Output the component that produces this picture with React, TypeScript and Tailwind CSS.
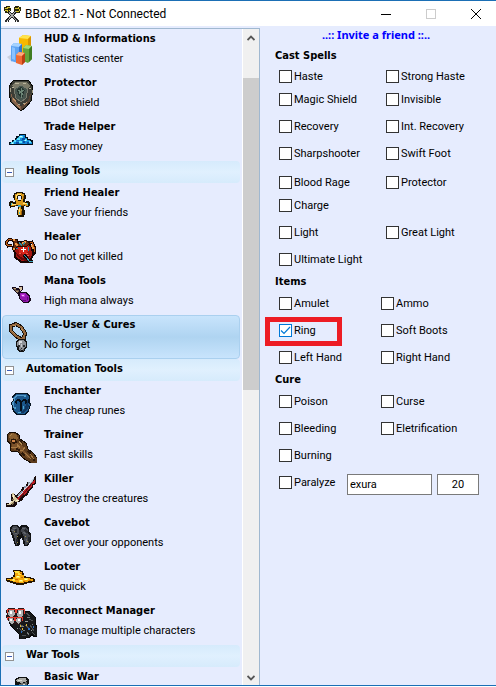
import { useState } from "react";
import type { ReactNode } from "react";

type Tool = { name: string; hint: string; icon: ReactNode };
type Group = { title?: string; tools: Tool[] };
type Spell = { label: string; checked?: boolean };

function Sprite({ children }: { children: ReactNode }) {
  return (
    <svg viewBox="0 0 32 32" className="h-8 w-8 shrink-0" shapeRendering="crispEdges" fill="none" aria-hidden="true">
      {children}
    </svg>
  );
}

const hudIcon = (
  <svg viewBox="0 0 32 32" className="h-8 w-8 shrink-0" fill="none" aria-hidden="true">
    <path d="M2 22l5-3v8z" fill="#c9cfdd" />
    <path d="M14 3l4-3 8 1v18l-5 3-7-2z" fill="#f8b800" />
    <path d="M14 3l4-3 8 1-3 3z" fill="#ffe34d" />
    <path d="M23 4l3-3v18l-3 2z" fill="#d99400" />
    <path d="M6 11l3-3 8 1v15l-4 4-7-2z" fill="#5fa4f3" />
    <path d="M6 11l3-3 8 1-3 3z" fill="#a5d2ff" />
    <path d="M14 12l3-3v15l-3 3z" fill="#3474cc" />
    <path d="M7 12l3 1v12l-3-1z" fill="#8cc3ff" />
    <path d="M18 13l3-3 6 1v13l-4 4-5-2z" fill="#65a53b" />
    <path d="M18 13l3-3 6 1-3 3z" fill="#a4d976" />
    <path d="M24 14l3-3v13l-3 3z" fill="#407c22" />
    <path d="M11 20l3-3 6 1v9l-3 3-6-2z" fill="#ef6a34" />
    <path d="M11 20l3-3 6 1-3 3z" fill="#ffab7c" />
    <path d="M17 21l3-3v9l-3 3z" fill="#b93e13" />
  </svg>
);

const shieldIcon = (
  <Sprite>
    <path d="M4 7l4-5 5-1h6l5 1 4 6-1 8-1 6-5 6-5 4-5-4-5-5-2-8z" fill="#3c3d36" stroke="#0c0c0a" />
    <path d="M7 6l3-3h11l4 4-3 3-6-4-7 4z" fill="#7c7a68" />
    <path d="M10 4h4M18 4h3M7 8h2M24 9h2" stroke="#b9b49c" />
    <path d="M9 10l7-4 7 4-2 9-5 4-5-4z" fill="#46544d" stroke="#77796b" />
    <path d="M12 10l4-2 4 3-2 6-2 2-3-3z" fill="#26342f" />
    <path d="M13 11l3 2 3-2M14 15l2-3 2 4M16 9v10" stroke="#6d8777" />
    <path d="M6 14l3 7 4 4 3 2v4l-4-3-5-6z" fill="#85624a" />
    <path d="M26 14l-3 7-4 4-3 2v4l4-3 5-6z" fill="#594434" />
    <path d="M8 19l3 4M12 26l3 3M19 26l3-3" stroke="#c08f63" />
    <path d="M13 25h2M18 24h2M5 9v4M27 11v3" stroke="#a8a18a" />
  </Sprite>
);

const tradeIcon = (
  <Sprite>
    <path d="M4 22v-3h3v-2h3v-2h1v-2h3v-2h7v3h2v2h3v1h2v5z" fill="#05121e" />
    <path d="M5 21v-1h3v-2h3v-2h2v-2h2v-2h5v3h2v2h3v2h2v2z" fill="#128bdb" />
    <path d="M6 20h3M9 18h2M12 16h3M14 14h4M19 17h3M24 19h2M14 19h3" stroke="#5be0f8" strokeWidth="2" />
    <path d="M11 20h3M17 16h3M22 20h2M18 19h2" stroke="#0a4fa6" strokeWidth="2" />
    <path d="M12 17h2M16 17h2M19 13h1" stroke="#0c6cc0" />
    <path d="M15 13h2M7 20h1M20 17h1" stroke="#d0fbff" />
  </Sprite>
);

const ankhIcon = (
  <Sprite>
    <path d="M11 3h7v1h2v2h1v4h-1v3h1v-1h3v1h1v4h-1v1h-3v-1h-2v4h1v5h-1v2h-6v-2h-1v-5h1v-4h-3v1H6v1H5v-2H4v-4h1v-1h3v1h2v-2H9V9H8V6h1V4h2z" fill="#1b1204" />
    <path d="M12 4h5v1h2v5h-1v3h2v1h3v3h-3v-1h-4v4h1v6h-4v-6h1v-4h-4v1H6v-3h2v1h3v-3h-1V5h2z" fill="#dc9b1c" />
    <path d="M13 6h3v1h1v3h-1v2h-3v-2h-1V7h1z" fill="#1b1204" />
    <path d="M13 7h3v4h-3z" fill="#e6ecfe" />
    <path d="M11 6v3M7 15h4M14 19v7M12 5h4M18 14h4" stroke="#ffe27a" />
    <path d="M16 22v4M18 7v3M16 16h3M9 16h2" stroke="#9e5d0b" />
    <path d="M13 16h3v2h-3z" fill="#3b9fba" />
    <path d="M6 15h1M22 15h1M14 24h1" stroke="#52c4d2" strokeWidth="2" />
  </Sprite>
);

const healerIcon = (
  <Sprite>
    <path d="M9 14l5-5h8l5 5 1 8-3 6-3 1h-6l-6-5z" fill="#a31410" stroke="#170503" strokeWidth="2" />
    <path d="M13 14l4-4 5 2 2 5-4 4-6-1z" fill="#d7261b" />
    <path d="M11 19l4 5 6 2 4-4-1 5-3 1-5-1-4-4z" fill="#650807" />
    <path d="M7 12l-4 1-2-3 2-3 4-1M23 10l4-1 2 4 1 6-2 3" stroke="#170503" strokeWidth="3" />
    <path d="M7 12l-4 1-2-3 2-3 4-1M24 10l3-1 2 5v5" stroke="#bd5c17" />
    <path d="M7 6h5l1 4h3l5-3 4 3-3 3h-6l-4 1-3 4-2-2 2-5z" fill="#6d2f10" stroke="#210b03" />
    <path d="M8 7h2M10 11l3 1M17 10l4-1M9 15v2M27 12l1 4" stroke="#f09b45" strokeWidth="2" />
    <path d="M14 9l3 4M20 9l-2 3M24 14l-1 4M11 15l2 1" stroke="#288ca4" />
    <path d="M19 22l3 3 2 3 4 1" stroke="#170503" strokeWidth="3" />
    <path d="M19 22l3 3 2 3h4" stroke="#3aa3bd" />
    <path d="M18 14v5M16 16h5" stroke="#fff" />
    <path d="M14 20h2M21 20h2M22 22h2" stroke="#f1584a" />
  </Sprite>
);

const manaIcon = (
  <Sprite>
    <path d="M7 10h4v1h3v-2h4v3l-2 3h5l4 4 1 4-2 3h-5l-4-3-2-5-5-5z" fill="#16091a" />
    <path d="M8 11h3v2h3v2l-2 1-4-4z" fill="#6c5947" />
    <path d="M14 10h3v2l-2 2z" fill="#d9c5a4" />
    <path d="M9 11h2M11 14h2" stroke="#b69a74" />
    <path d="M15 16h6l3 4v4l-3 1h-3l-3-3z" fill="#9318ad" />
    <path d="M16 17h4v3h-3z" fill="#b935d2" />
    <path d="M17 23h4M22 20v3" stroke="#610a7c" />
    <path d="M17 18h2" stroke="#f7b7ff" />
  </Sprite>
);

const amuletIcon = (
  <Sprite>
    <path d="M6 5l5-2 5 3 4 6-1 5-3 1-5-3-5-5z" stroke="#17100a" strokeWidth="4" />
    <path d="M6 5l5-2 5 3 4 6-1 5-3 1-5-3-5-5z" stroke="#94683d" strokeWidth="2" />
    <path d="M8 4h3M16 7l2 3M7 10l3 3" stroke="#ba8c57" />
    <path d="M13 18h7l2 3v5l-2 2v2l-2 1h-4l-2-2v-2l-1-2v-4z" fill="#111" />
    <path d="M14 19h5l2 3v3l-2 2v2h-5v-2l-2-2v-3z" fill="#8e9196" />
    <path d="M14 20h3v2h-2v2h-1z" fill="#d7dade" />
    <path d="M13 24h2v2h-2zM18 24h2v2h-2zM16 27h1v1h-1z" fill="#2b2d30" />
    <path d="M15 28v2M18 28v2" stroke="#54575b" />
    <path d="M16 23h1v3h-1z" fill="#c8cbd0" />
  </Sprite>
);

const runeIcon = (
  <Sprite>
    <path d="M10 6h12l3 2v6l1 4-2 6-4 4h-8l-4-3-1-5-1-4 2-3-1-4z" fill="#061421" />
    <path d="M11 7h10l3 2-1 6 2 3-2 5-4 4h-6l-4-3-1-8 1-3-1-3z" fill="#1b568a" />
    <path d="M11 8h9l1 1H12l-2 3-1 5 1 6-2-3-1-4 2-3-1-2z" fill="#5196c5" />
    <path d="M22 10l1 6 1 3-2 4-4 3h-4l5-3 2-5z" fill="#10365f" />
    <path
      d="M11 13h1v-1h3v1h1v1h1v-1h1v-1h3v1h1v3h-1v1h-1v-3h-2v1h-1v9h-2v-9h-1v-1h-2v3h-1v-1h-1z"
      fill="#05101b"
    />
    <path d="M10 20v2M13 25h3M19 9h2M18 19v3" stroke="#4ba7d0" />
  </Sprite>
);

const trainerIcon = (
  <Sprite>
    <path d="M2 4l3-3h5l4 3 1 4 6 4 2 6 5 4 4 5v5h-6l-8-5-5-6-2-1H6l-1-4 1-3-4-3z" fill="#5d3b1c" stroke="#160c04" />
    <path d="M4 4l3-2 4 1 2 4-2 3-3-3-3 3z" fill="#8a6132" />
    <path d="M6 8h5l1 4-3 1-3-2z" fill="#2c1809" />
    <path d="M7 9h3v2H7z" fill="#d1884c" />
    <path d="M7 13l6-1 6 4-1 3 8 7-3 1-9-7-7-2z" fill="#7c522a" />
    <path d="M6 16l4 1 4-2M14 19h4l2-3M20 22l6 6M25 23l4 5M12 13l3 4" stroke="#a87b45" />
    <path d="M11 18l4 1M17 22l3 3M15 9l2 4M23 20l3 3M28 29h2" stroke="#2d1a0b" strokeWidth="2" />
    <path d="M5 5l2-2M14 10l3 4" stroke="#b18a51" />
  </Sprite>
);

const swordIcon = (
  <Sprite>
    <path d="M31 0v9l-3 1v3l-4 3-1 4-4 2-2 4-5 1v3l-3 2H1v-4h3l2-2v-7h3l2 2 3-4 2-1 1-4 4-1 1-4h4z" fill="#180b0b" />
    <path d="M30 2l-4 5h-3v4h-4v4l-5 3-2 4 2 2 5-4 3-4 5-7z" fill="#8c98a8" />
    <path d="M29 3l-6 8-6 7-4 4M24 8v3M19 13v3" stroke="#cfd8e2" />
    <path d="M30 5v3l-3 1v3l-4 3-2 4-4 2-2 3-3 1v-2l6-6 6-7z" fill="#bb1d22" />
    <path d="M27 8l-6 8-7 8" stroke="#601014" />
    <path d="M7 18h2l1 4 5 4-4 1-2-1-3 4H2v-1h3l3-4z" fill="#d2c49c" />
    <path d="M8 20v3M11 25h3M4 29l3-3" stroke="#fff4cc" />
    <path d="M7 24l2 1M9 27l-2 3" stroke="#7e6947" />
  </Sprite>
);

const bootsIcon = (
  <Sprite>
    <path d="M7 6h5l2 2 3-2h4l3 3v3l2 3v7l-2 3-2 2h-3l-1-4-1-5-2 3v4l-2 2h-3l-1-4-2-5-1-5H5v-5z" fill="#111214" />
    <path d="M8 7h4l2 3v5l-2 1-1 8 1 1-1 1-2-9-3-6z" fill="#474a50" />
    <path d="M17 8h3l3 3v4l2 2-1 6-2 3h-2l-1-8-3-6z" fill="#42454c" />
    <path d="M8 9h3M7 11h2M17 9h3M18 13l3 2M10 14h2M21 20v3" stroke="#62666d" />
    <path d="M11 10v4M15 11v5M20 11l3 3M24 18v4M12 20v4" stroke="#25272b" strokeWidth="2" />
    <path d="M9 12h1M20 17h1M12 17h1M22 22h1M12 23h1" stroke="#9b8b45" />
  </Sprite>
);

const goldIcon = (
  <Sprite>
    <path d="M8 7h8v1h2v2h1v3h2v1h5v1h3v1h1v3h-3v1h-5v1h-3v1h-8v-1H8v-1H5v-1H2v-1H1v-3h5v-1h2v-2h1v-3H8z" fill="#241400" />
    <path d="M9 8h6v1h2v3h2v3h6v1h3v2h-5v1h-4v1h-7v-1H8v-1H5v-1H2v-1h6v-2h2V9H9z" fill="#f4a70a" />
    <path d="M10 9h4M13 11h3M11 14h4M7 17h3M19 16h4M14 18h4" stroke="#ffe343" strokeWidth="2" />
    <path d="M15 10h2M16 14h2M10 16h3M24 17h2M11 19h3M18 18h2" stroke="#c96d00" />
    <path d="M12 13h2M15 17h2M8 16h1M20 16h2" stroke="#fff7a5" />
  </Sprite>
);

const reconnectIcon = (
  <Sprite>
    <path d="M8 9h10l2-5 5 1 2 2 3 3v6l2 5v8l-3 1-2-3-2 3h-3l-2 2h-5l-1-5-5-5-5-6z" fill="#17191b" stroke="#070708" />
    <path d="M21 6l4 3M24 12l4 2M20 18l5 4M25 18l4 6M14 21l4 4M17 28h4M27 25l3 3M13 16l5 3" stroke="#4b5053" />
    <path d="M22 10h3M18 23h2M27 17h1M16 19h3M22 25l2 3" stroke="#777c7d" />
    <path d="M3 1h6l2 2 2-2h6l1 3-1 6-2 2v4l-4 2-4-1-4-1-3-3-1-4 1-2-1-3z" fill="#261819" />
    <path d="M4 3h5l1 4-2 3H5L3 7zM13 3h5v5l-3 3-3-2zM4 11h4l1 4-2 2-3-2zM12 11h4v4l-3 2-2-3z" fill="#aeb0b1" />
    <path d="M5 4h2v3H5zM14 4h2v3h-2zM5 12h2v2H5zM13 12h2v2h-2z" fill="#fff" />
    <path d="M2 6V3l2-1h6v4M11 6V3l2-1h6v5M2 13l1-3h6l1 4M10 14l1-4h7l-1 4" stroke="#e23a2d" />
    <path d="M15 19h1M21 18h1M17 22h1" stroke="#e0b831" strokeWidth="2" />
    <path d="M23 22h2M16 25h1M28 20h1" stroke="#246bc6" strokeWidth="2" />
    <path d="M12 21h1M20 14h3M26 23h1" stroke="#989c9c" />
  </Sprite>
);

const warIcon = (
  <Sprite>
    <path d="M10 6l4-2h8l2 3-1 8 1 9-9 6-8-4V12h3z" fill="#111" />
    <path d="M11 7l4-2h6l1 3-5 2-5-1z" fill="#a9a9a5" />
    <path d="M8 12h5l4-2 5-1v11H8z" fill="#696a67" />
    <path d="M13 7h4M9 13h2M18 11h2" stroke="#dad9d1" />
  </Sprite>
);

const groups: Group[] = [
  {
    tools: [
      { name: "HUD & Informations", hint: "Statistics center", icon: hudIcon },
      { name: "Protector", hint: "BBot shield", icon: shieldIcon },
      { name: "Trade Helper", hint: "Easy money", icon: tradeIcon },
    ],
  },
  {
    title: "Healing Tools",
    tools: [
      { name: "Friend Healer", hint: "Save your friends", icon: ankhIcon },
      { name: "Healer", hint: "Do not get killed", icon: healerIcon },
      { name: "Mana Tools", hint: "High mana always", icon: manaIcon },
      { name: "Re-User & Cures", hint: "No forget", icon: amuletIcon },
    ],
  },
  {
    title: "Automation Tools",
    tools: [
      { name: "Enchanter", hint: "The cheap runes", icon: runeIcon },
      { name: "Trainer", hint: "Fast skills", icon: trainerIcon },
      { name: "Killer", hint: "Destroy the creatures", icon: swordIcon },
      { name: "Cavebot", hint: "Get over your opponents", icon: bootsIcon },
      { name: "Looter", hint: "Be quick", icon: goldIcon },
      { name: "Reconnect Manager", hint: "To manage multiple characters", icon: reconnectIcon },
    ],
  },
  {
    title: "War Tools",
    tools: [{ name: "Basic War", hint: "", icon: warIcon }],
  },
];

function TitleBar() {
  return (
    <header className="flex h-[25px] shrink-0 items-center bg-white">
      <svg viewBox="0 0 18 18" className="ml-[2px] h-[18px] w-[18px]" shapeRendering="crispEdges" fill="none" aria-hidden="true">
        <path d="M4 5l10 11M14 5L4 16" stroke="#222" strokeWidth="3" />
        <path d="M4 5l10 11M14 5L4 16" stroke="#a9aaa8" />
        <path d="M1 2h2V1h4v2h1v3H6v2H2V6H1zM11 2h1V1h4v1h2v4h-1v2h-4V6h-2z" fill="#29270a" />
        <path d="M2 3h2V2h2v1M2 5h2v2M6 5v1M12 3h3V2M13 6h3M16 4v2" stroke="#d4c42c" />
        <path d="M2 15h2v2H2zM14 15h2v2h-2z" fill="#333" />
      </svg>
      <h1 className="ml-1 flex-1 font-['Roboto',sans-serif] text-[12px] leading-4 text-black">BBot 82.1 - Not Connected</h1>
      <button type="button" aria-label="Minimize" className="flex h-full w-10 items-center justify-center">
        <svg viewBox="0 0 10 10" className="h-[10px] w-[10px]" shapeRendering="crispEdges" aria-hidden="true">
          <path d="M0 5h10v1H0z" />
        </svg>
      </button>
      <button type="button" aria-label="Maximize" disabled className="flex h-full w-[50px] items-center justify-center">
        <svg viewBox="0 0 10 10" className="h-[10px] w-[10px]" shapeRendering="crispEdges" fill="none" aria-hidden="true">
          <path d="M.5.5h9v9h-9z" stroke="#ccc" />
        </svg>
      </button>
      <button type="button" aria-label="Close" className="flex h-full w-10 items-center justify-center">
        <svg viewBox="0 0 10 10" className="h-[10px] w-[10px]" fill="none" aria-hidden="true">
          <path d="M0 0l10 10M10 0L0 10" stroke="#000" />
        </svg>
      </button>
    </header>
  );
}

function ToolList() {
  const [selected, setSelected] = useState("Re-User & Cures");

  return (
    <nav className="min-w-0 flex-1 overflow-hidden border-r border-white pr-[2px] pl-px">
      {groups.map((group) => (
        <section key={group.title ?? "main"}>
          {group.title ? (
            <h2 className="flex h-[22px] items-center rounded-sm bg-linear-to-b from-[#d6ebfc] via-[#e0f0fe] to-[#d6ebfc]">
              <button
                type="button"
                aria-label={"Collapse " + group.title}
                className="ml-[3px] flex h-[9px] w-[9px] items-center justify-center border border-[#929292] bg-white"
              >
                <span className="h-px w-[5px] bg-[#3c5cb4]" />
              </button>
              <span className="ml-3 pb-[3px] font-['DejaVu_Sans_Condensed',sans-serif] text-[11px] leading-4 font-bold">
                {group.title}
              </span>
            </h2>
          ) : null}
          {group.tools.map((tool) => (
            <button
              key={tool.name}
              type="button"
              onClick={() => setSelected(tool.name)}
              className={
                tool.name === selected
                  ? "flex h-11 w-full items-center rounded-sm border border-[#aad0ef] bg-linear-to-b from-[#c8e4fc] via-[#afd4f1] to-[#c8e4fc] pl-[2px] text-left"
                  : "flex h-11 w-full items-center border border-transparent pl-[2px] text-left"
              }
            >
              {tool.icon}
              <span className="ml-[7px] flex flex-col gap-1 pb-1 whitespace-nowrap">
                <span className="font-['DejaVu_Sans_Condensed',sans-serif] text-[11px] leading-4 font-bold">{tool.name}</span>
                <span className="h-4 text-[11px] leading-4">{tool.hint}</span>
              </span>
            </button>
          ))}
        </section>
      ))}
    </nav>
  );
}

function ScrollBar() {
  return (
    <div className="flex w-4 shrink-0 flex-col bg-[#f0f0f0]">
      <button type="button" aria-label="Scroll up" className="flex h-[18px] shrink-0 items-center justify-center">
        <svg viewBox="0 0 8 6" className="h-[6px] w-2" fill="none" aria-hidden="true">
          <path d="M.5 5L4 1.5 7.5 5" stroke="#555" strokeWidth="1.8" />
        </svg>
      </button>
      <div className="flex min-h-0 flex-1 flex-col">
        <div className="h-[5%]" />
        <div className="h-[50%] bg-[#cdcdcd]" />
      </div>
      <button type="button" aria-label="Scroll down" className="flex h-[14px] shrink-0 items-center justify-center">
        <svg viewBox="0 0 8 6" className="h-[6px] w-2" fill="none" aria-hidden="true">
          <path d="M.5 1L4 4.5 7.5 1" stroke="#555" strokeWidth="1.8" />
        </svg>
      </button>
    </div>
  );
}

function Check({ label, checked = false }: Spell) {
  return (
    <label className="flex items-center gap-[2px] text-[11px] leading-4 whitespace-nowrap">
      <span className="relative flex h-[13px] w-[13px]">
        <input
          type="checkbox"
          defaultChecked={checked}
          className="peer h-[13px] w-[13px] appearance-none border border-[#333] bg-white checked:border-[#0078d7]"
        />
        <svg
          viewBox="0 0 13 13"
          className="pointer-events-none absolute inset-0 hidden h-[13px] w-[13px] peer-checked:block"
          fill="none"
          aria-hidden="true"
        >
          <path d="M2 6.5l3 3 6-6.5" stroke="#0078d7" strokeWidth="1.2" />
        </svg>
      </span>
      {label}
    </label>
  );
}

function SectionTitle({ children }: { children: ReactNode }) {
  return (
    <h2 className="ml-[15px] h-[17px] font-['DejaVu_Sans_Condensed',sans-serif] text-[11px] leading-[18px] font-bold">
      {children}
    </h2>
  );
}

function SpellRow({ left, right, className = "h-[27px]" }: { left: string; right?: string; className?: string }) {
  return (
    <div className={"ml-[19px] grid grid-cols-[107px_1fr] items-center " + className}>
      <Check label={left} />
      {right ? <Check label={right} /> : null}
    </div>
  );
}

function ItemRow({ left, right, checked }: { left: string; right?: string; checked?: boolean }) {
  return (
    <div className="ml-[19px] grid h-[27px] grid-cols-[102px_1fr] items-center">
      <Check label={left} checked={checked} />
      {right ? <Check label={right} /> : null}
    </div>
  );
}

function CuresPanel() {
  return (
    <main className="min-w-0 flex-1">
      <a
        href="#invite"
        className="block h-5 pr-1 text-center font-['Noto_Sans',sans-serif] text-[11px] leading-[18px] font-bold text-[#0000ff]"
      >
        ..:: Invite a friend ::..
      </a>
      <div className="mt-px mb-[3px]">
        <SectionTitle>Cast Spells</SectionTitle>
      </div>
      <SpellRow left="Haste" right="Strong Haste" className="h-[19px]" />
      <SpellRow left="Magic Shield" right="Invisible" />
      <SpellRow left="Recovery" right="Int. Recovery" />
      <SpellRow left="Sharpshooter" right="Swift Foot" />
      <SpellRow left="Blood Rage" right="Protector" className="mt-[2px] h-[27px]" />
      <SpellRow left="Charge" className="h-[19px]" />
      <SpellRow left="Light" right="Great Light" className="mt-1 h-[27px]" />
      <SpellRow left="Ultimate Light" />

      <SectionTitle>Items</SectionTitle>
      <ItemRow left="Amulet" right="Ammo" />
      <div className="relative">
        <ItemRow left="Ring" right="Soft Boots" checked />
        <div className="pointer-events-none absolute top-0 left-[5px] h-[29px] w-[77px] border-5 border-[#ed1c24]" />
      </div>
      <ItemRow left="Left Hand" right="Right Hand" />

      <SectionTitle>Cure</SectionTitle>
      <ItemRow left="Poison" right="Curse" />
      <ItemRow left="Bleeding" right="Eletrification" />
      <ItemRow left="Burning" />
      <div className="ml-[19px] flex h-[27px] items-center">
        <div className="w-[68px]">
          <Check label="Paralyze" />
        </div>
        <input
          aria-label="Paralyze spell"
          defaultValue="exura"
          className="mt-1 h-[21px] w-[85px] border border-[#7a7a7a] bg-white px-[2px] text-[11px]"
        />
        <input
          aria-label="Paralyze mana"
          defaultValue="20"
          className="mt-1 ml-[5px] h-[21px] w-[42px] border border-[#7a7a7a] bg-white text-center text-[11px]"
        />
      </div>
    </main>
  );
}

export default function App() {
  return (
    <div className="h-screen overflow-hidden bg-white pb-px font-['Roboto',sans-serif] text-black">
      <div className="flex h-full flex-col border-t border-b border-l border-[#1b6fb5] bg-[#e6ecfe]">
        <TitleBar />
        <div className="flex min-h-0 flex-1">
          <div className="mt-[2px] flex w-[259px] shrink-0 border-t border-r border-[#a0b8d0]">
            <ToolList />
            <ScrollBar />
          </div>
          <CuresPanel />
        </div>
      </div>
    </div>
  );
}
